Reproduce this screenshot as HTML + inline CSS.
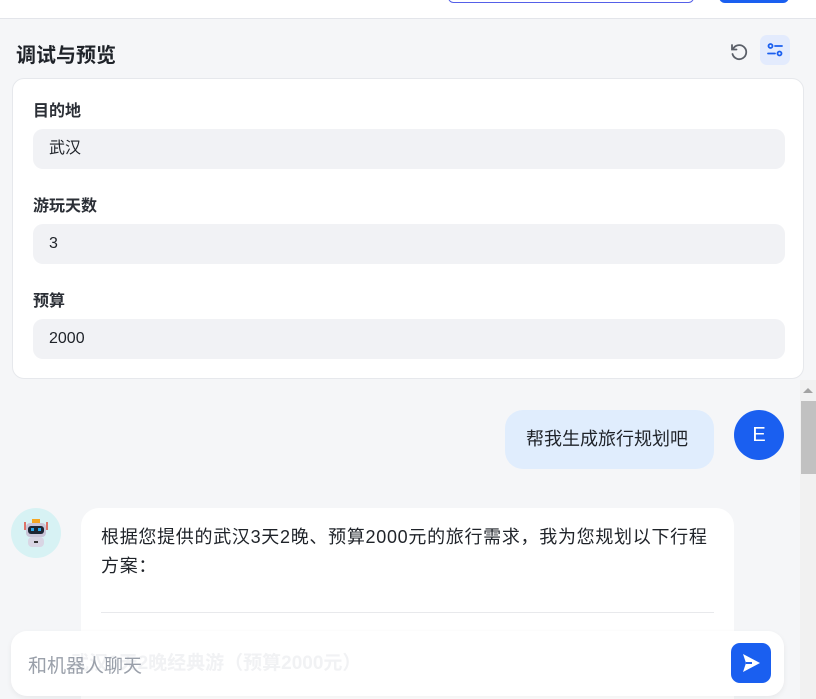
<!DOCTYPE html>
<html><head><meta charset="utf-8"><style>
*{box-sizing:border-box;margin:0;padding:0}
html,body{width:816px;height:699px;overflow:hidden}
body{background:#f5f6f8;font-family:"Liberation Sans","Noto Sans CJK SC",sans-serif;position:relative;color:#1f2329}
.top{position:absolute;left:0;top:0;width:816px;height:19px;background:#fff;border-bottom:1px solid #e3e5ea}
.tb1{position:absolute;left:448px;top:-8px;width:246px;height:11px;border:1px solid #5560e8;border-radius:6px;background:#fff}
.tb2{position:absolute;left:719px;top:-10px;width:70px;height:13px;background:#1a5ff0;border-radius:6px}
h1{position:absolute;left:16px;top:39px;font-size:20px;font-weight:bold;color:#1f2329}
.ic{position:absolute;left:760px;top:35px;width:30px;height:30px;background:#e3ebfd;border-radius:7px}
.card{position:absolute;left:12px;top:78px;width:792px;height:301px;background:#fff;border:1px solid #e6e8ec;border-radius:12px}
.lab{position:absolute;left:20px;font-size:16px;font-weight:bold;color:#2b2f36}
.inp{position:absolute;left:20px;width:752px;height:40px;background:#f1f2f5;border-radius:10px;font-size:16px;padding-left:16px;line-height:40px;color:#1f2329}
.ub{position:absolute;left:505px;top:410px;width:209px;height:59px;background:#e0edfd;border-radius:18px;font-size:18px;line-height:59px;padding-left:21px;color:#1f2329}
.av{position:absolute;left:734px;top:410px;width:50px;height:50px;border-radius:50%;background:#1a5ff0;color:#fff;font-size:20px;text-align:center;line-height:50px}
.bot{position:absolute;left:11px;top:508px;width:50px;height:50px;border-radius:50%;background:#d7f2f4}
.bb{position:absolute;left:81px;top:508px;width:653px;height:191px;background:#fff;border-radius:18px 18px 0 0;padding:15px 20px;font-size:18px;line-height:29px;letter-spacing:0.7px;color:#1f2329;overflow:hidden}
.hr{position:absolute;left:20px;right:20px;top:104px;border-top:1px solid #e8e9ec}
.sb{position:absolute;left:800px;top:380px;width:16px;height:319px;background:#f1f1f1}
.thumb{position:absolute;left:801px;top:401px;width:15px;height:73px;background:#c1c1c1}
.input{position:absolute;left:11px;top:631px;width:773px;height:65px;background:rgba(255,255,255,0.97);border-radius:16px;box-shadow:0 2px 6px rgba(0,0,0,0.06)}
.ghost{position:absolute;left:70px;top:648px;font-size:19px;font-weight:bold;color:#f1f2f4}
.ph{position:absolute;left:28px;top:651px;font-size:19px;color:#9aa0aa}
.send{position:absolute;left:731px;top:643px;width:40px;height:40px;background:#1a5ff0;border-radius:9px}
</style></head><body>
<div class="top"><div class="tb1"></div><div class="tb2"></div></div>
<h1>调试与预览</h1>
<svg style="position:absolute;left:728px;top:41px" width="22" height="22" viewBox="0 0 22 22" fill="none" stroke="#5a5f68" stroke-width="1.8" stroke-linecap="round"><path d="M5 8 A7 7 0 1 1 4.5 13"/><path d="M4 4 V8.5 H8.5"/></svg>
<div class="ic"><svg width="30" height="30" viewBox="0 0 30 30" fill="none" stroke="#1a5ff0" stroke-width="1.8" stroke-linecap="round"><circle cx="10.5" cy="11" r="2"/><path d="M15 11 H22"/><circle cx="19.5" cy="18.5" r="2"/><path d="M8 18.5 H15"/></svg></div>
<div class="card">
<div class="lab" style="top:18px">目的地</div>
<div class="inp" style="top:50px">武汉</div>
<div class="lab" style="top:113px">游玩天数</div>
<div class="inp" style="top:145px">3</div>
<div class="lab" style="top:208px">预算</div>
<div class="inp" style="top:240px">2000</div>
</div>
<div class="ub">帮我生成旅行规划吧</div>
<div class="av">E</div>
<div class="bot"><svg width="50" height="50" viewBox="0 0 50 50"><rect x="21" y="11" width="8" height="4" fill="#f5a623"/><path d="M14 14 v8 M36 14 v8" stroke="#e04a3a" stroke-width="1.5"/><rect x="15" y="15" width="20" height="14" rx="4" fill="#c9c5d8"/><rect x="17" y="18" width="16" height="8" rx="3" fill="#1d2633"/><rect x="20" y="20" width="3" height="3" fill="#2aa7e8"/><rect x="27" y="20" width="3" height="3" fill="#2aa7e8"/><rect x="17" y="29" width="16" height="10" rx="4" fill="#d9d6e4"/><rect x="23" y="33" width="4" height="2" fill="#333"/></svg></div>
<div class="bb">根据您提供的武汉3天2晚、预算2000元的旅行需求，我为您规划以下行程<br>方案：<div class="hr"></div></div>
<div class="sb"></div>
<svg style="position:absolute;left:803px;top:387px" width="10" height="6"><path d="M0 6 L5 1 L10 6Z" fill="#a3a3a3"/></svg>
<div class="thumb"></div>
<div class="input"></div>
<div class="ghost">武汉3天2晚经典游（预算2000元）</div>
<div class="ph">和机器人聊天</div>
<div class="send"><svg width="40" height="40" viewBox="0 0 40 40"><path d="M12 11 L29 20 L12 29 L15 20 Z" fill="#fff"/><path d="M15 20 H21" stroke="#1a5ff0" stroke-width="2"/></svg></div>
</body></html>
